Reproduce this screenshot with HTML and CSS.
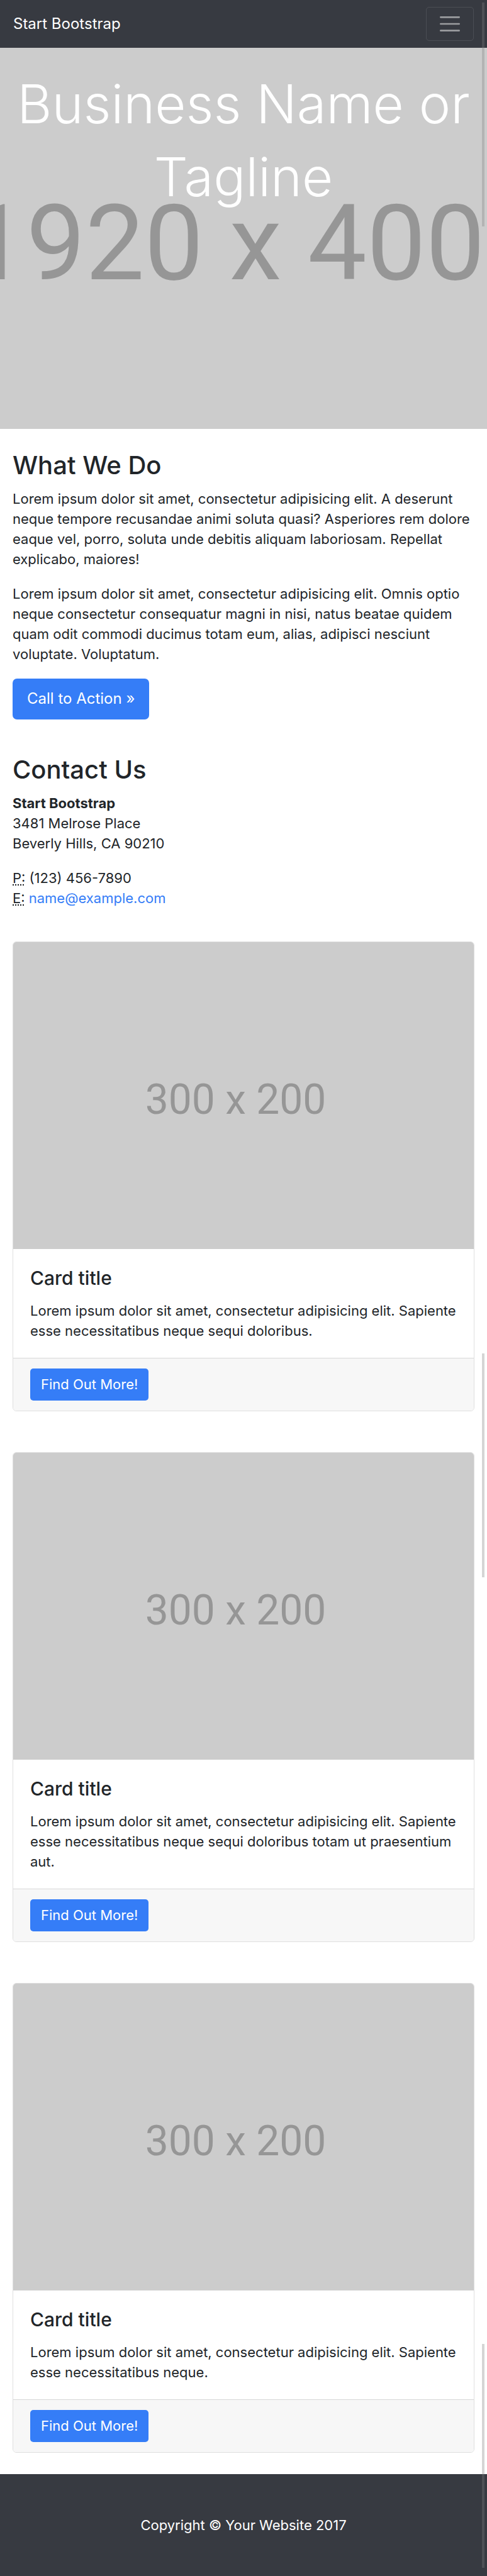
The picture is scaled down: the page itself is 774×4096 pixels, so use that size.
FILE: index.html
```html
<!DOCTYPE html>
<html lang="en">
<head>
<meta charset="utf-8">
<meta name="viewport" content="width=device-width, initial-scale=1">
<title>Start Bootstrap</title>
<link rel="stylesheet" href="styles.css">
</head>
<body>
<nav class="navbar">
  <a class="brand" href="#">Start Bootstrap</a>
  <button class="toggler" type="button" aria-label="Toggle navigation">
    <svg class="toggler-icon" viewBox="0 0 30 30" aria-hidden="true"><path d="M4 7h22M4 15h22M4 23h22" fill="none" stroke="currentColor" stroke-width="2" stroke-linecap="round"/></svg>
  </button>
</nav>

<header class="hero">
  <svg class="hero-image" viewBox="0 0 774 606" preserveAspectRatio="xMidYMid slice" aria-hidden="true"><text class="placeholder-text" x="-52" y="368" font-size="167">1920 x 400</text></svg>
  <h1 class="hero-title">Business Name or Tagline</h1>
</header>

<main class="container">
  <section class="section">
    <h2 class="heading">What We Do</h2>
    <p class="text">Lorem ipsum dolor sit amet, consectetur adipisicing elit. A deserunt neque tempore recusandae animi soluta quasi? Asperiores rem dolore eaque vel, porro, soluta unde debitis aliquam laboriosam. Repellat explicabo, maiores!</p>
    <p class="text">Lorem ipsum dolor sit amet, consectetur adipisicing elit. Omnis optio neque consectetur consequatur magni in nisi, natus beatae quidem quam odit commodi ducimus totam eum, alias, adipisci nesciunt voluptate. Voluptatum.</p>
    <a class="btn btn-large" href="#">Call to Action »</a>
  </section>

  <section class="section">
    <h2 class="heading">Contact Us</h2>
    <address class="text"><strong>Start Bootstrap</strong><br>3481 Melrose Place<br>Beverly Hills, CA 90210</address>
    <address class="text"><abbr title="Phone">P:</abbr> (123) 456-7890<br><abbr title="Email">E:</abbr> <a class="link" href="mailto:name@example.com">name@example.com</a></address>
  </section>

  <section class="cards">
    <article class="card">
      <svg class="card-image" viewBox="0 0 300 200" aria-hidden="true"><text class="placeholder-text" x="86" y="112" font-size="27">300 x 200</text></svg>
      <div class="card-body">
        <h4 class="card-title">Card title</h4>
        <p class="card-text">Lorem ipsum dolor sit amet, consectetur adipisicing elit. Sapiente esse necessitatibus neque sequi doloribus.</p>
      </div>
      <div class="card-footer"><a class="btn" href="#">Find Out More!</a></div>
    </article>
    <article class="card">
      <svg class="card-image" viewBox="0 0 300 200" aria-hidden="true"><text class="placeholder-text" x="86" y="112" font-size="27">300 x 200</text></svg>
      <div class="card-body">
        <h4 class="card-title">Card title</h4>
        <p class="card-text">Lorem ipsum dolor sit amet, consectetur adipisicing elit. Sapiente esse necessitatibus neque sequi doloribus totam ut praesentium aut.</p>
      </div>
      <div class="card-footer"><a class="btn" href="#">Find Out More!</a></div>
    </article>
    <article class="card">
      <svg class="card-image" viewBox="0 0 300 200" aria-hidden="true"><text class="placeholder-text" x="86" y="112" font-size="27">300 x 200</text></svg>
      <div class="card-body">
        <h4 class="card-title">Card title</h4>
        <p class="card-text">Lorem ipsum dolor sit amet, consectetur adipisicing elit. Sapiente esse necessitatibus neque.</p>
      </div>
      <div class="card-footer"><a class="btn" href="#">Find Out More!</a></div>
    </article>
  </section>
</main>

<footer class="footer"><p class="copyright">Copyright © Your Website 2017</p></footer>

<div class="scroll-thumb thumb-first" aria-hidden="true"></div>
<div class="scroll-thumb thumb-second" aria-hidden="true"></div>
<div class="scroll-thumb thumb-third" aria-hidden="true"></div>
</body>
</html>
```
FILE: styles.css
```css
* { box-sizing: border-box; }

body {
  position: relative;
  margin: 0;
  background: #fff;
  color: #212529;
  font-family: Inter, "Liberation Sans", sans-serif;
  font-size: 22px;
  line-height: 32px;
}

.navbar {
  display: flex;
  align-items: center;
  justify-content: space-between;
  padding: 11px 21px;
  background: #373a41;
}

.brand {
  color: #fff;
  font-size: 24px;
  text-decoration: none;
}

.toggler {
  display: flex;
  padding: 6px 17px;
  border: 1px solid rgba(255, 255, 255, 0.1);
  border-radius: 5px;
  background: transparent;
  color: rgba(255, 255, 255, 0.5);
}

.toggler-icon {
  width: 40px;
  height: 40px;
}

.hero {
  display: grid;
  min-height: 606px;
  background: #ccc;
}

.hero-image {
  grid-area: 1 / 1;
  width: 100%;
  height: 606px;
}

.placeholder-text {
  fill: #969696;
  font-family: Roboto, "Liberation Sans", sans-serif;
}

.hero-title {
  grid-area: 1 / 1;
  margin: 32px 20px 0;
  color: #fff;
  font-size: 85px;
  font-weight: 300;
  line-height: 116px;
  text-align: center;
}

.container { padding: 0 20px; }

.section {
  padding-top: 32px;
  padding-bottom: 22px;
}

.section:nth-child(2) { padding-bottom: 0; }

.heading {
  margin: 0 0 11px;
  font-size: 40px;
  font-weight: 500;
  line-height: 52px;
}

.text {
  margin: 0 0 23px;
  font-style: normal;
}

.text strong { font-weight: 700; }

.link {
  color: #357df7;
  text-decoration: none;
}

.btn {
  display: inline-block;
  padding: 9px 17px 10px;
  border-radius: 5px;
  background: #357df7;
  color: #fff;
  text-decoration: none;
  vertical-align: top;
}

.btn-large {
  padding: 16px 23px 17px;
  border-radius: 7px;
  font-size: 24px;
}

.cards {
  display: grid;
  gap: 65px;
  padding: 30px 0 34px;
}

.card {
  overflow: hidden;
  border: 1px solid #dfdfdf;
  border-radius: 6px;
}

.card-image {
  display: block;
  width: 100%;
  background: #ccc;
}

.card-body { padding: 27px; }

.card-title {
  margin: 0 0 16px;
  font-size: 30px;
  font-weight: 500;
  line-height: 39px;
}

.card-text { margin: 0; }

.card-footer {
  padding: 16px 27px;
  border-top: 1px solid #d8d8d8;
  background: #f7f7f7;
}

.footer {
  padding: 65px 20px;
  background: #373a41;
  color: #fff;
  text-align: center;
}

.copyright { margin: 0; }

.scroll-thumb {
  position: absolute;
  right: 4px;
  width: 4px;
  height: 356px;
  background: rgba(128, 128, 128, 0.33);
}

.thumb-first { top: 4px; }
.thumb-second { top: 2152px; }
.thumb-third { top: 3727px; }
```
